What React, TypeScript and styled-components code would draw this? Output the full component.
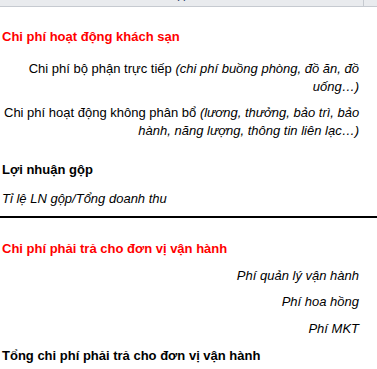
import styled, { createGlobalStyle } from 'styled-components';

const GlobalStyle = createGlobalStyle`
  html, body {
    margin: 0;
    padding: 0;
    background: #ffffff;
  }
  body {
    font-family: 'Liberation Sans', Arial, sans-serif;
    font-size: 13px;
    color: #000000;
  }
`;

const Sheet = styled.div`
  width: 377px;
  height: 369px;
  overflow: hidden;
  display: flex;
  flex-direction: column;
`;

const ColumnHeader = styled.div`
  display: flex;
  height: 6px;
  flex: 0 0 auto;
  background: #e9ebee;
  border-bottom: 1px solid #c6cad0;
`;

const HeaderCell = styled.div<{ w: number }>`
  width: ${({ w }) => w}px;
  flex: 0 0 auto;
  border-right: 1px solid #c6cad0;
  overflow: hidden;
  display: flex;
  justify-content: center;
  align-items: flex-end;
`;

// only the foot of the column letter peeks out below the scrolled edge
const HeaderLabel = styled.span`
  font-size: 11px;
  line-height: 11px;
  color: #1f3a66;
  margin-bottom: 3px;
`;

const Row = styled.div<{ h: number; pad?: number; border?: boolean }>`
  height: ${({ h }) => h}px;
  flex: 0 0 auto;
  box-sizing: border-box;
  display: flex;
  align-items: flex-end;
  padding-bottom: ${({ pad }) => pad ?? 3}px;
  border-bottom: ${({ border }) => (border ? '2px solid #000000' : 'none')};
`;

const Cell = styled.div<{ align?: 'left' | 'right' }>`
  width: 363px;
  box-sizing: border-box;
  padding: 0 ${({ align }) => (align === 'right' ? '4px' : '2px')};
  text-align: ${({ align }) => align ?? 'left'};
  line-height: 18px;
  white-space: nowrap;
`;

const Heading = styled.span<{ red?: boolean }>`
  font-weight: bold;
  color: ${({ red }) => (red ? '#ff0000' : '#000000')};
`;

const Note = styled.span`
  font-style: italic;
`;

export default function App() {
  return (
    <Sheet>
      <GlobalStyle />
      <ColumnHeader>
        <HeaderCell w={363}>
          <HeaderLabel>A</HeaderLabel>
        </HeaderCell>
      </ColumnHeader>

      <Row h={42}>
        <Cell>
          <Heading red>Chi phí hoạt động khách sạn</Heading>
        </Cell>
      </Row>
      <Row h={50}>
        <Cell align="right">
          Chi phí bộ phận trực tiếp <Note>(chi phí buồng phòng, đồ ăn, đồ</Note>
          <br />
          <Note>uống…)</Note>
        </Cell>
      </Row>
      <Row h={44}>
        <Cell align="right">
          Chi phí hoạt động không phân bổ <Note>(lương, thưởng, bảo trì, bảo</Note>
          <br />
          <Note>hành, năng lượng, thông tin liên lạc…)</Note>
        </Cell>
      </Row>
      <Row h={39}>
        <Cell>
          <Heading>Lợi nhuận gộp</Heading>
        </Cell>
      </Row>
      <Row h={36} pad={8} border>
        <Cell>
          <Note>Tỉ lệ LN gộp/Tổng doanh thu</Note>
        </Cell>
      </Row>

      <Row h={43}>
        <Cell>
          <Heading red>Chi phí phải trả cho đơn vị vận hành</Heading>
        </Cell>
      </Row>
      <Row h={27}>
        <Cell align="right">
          <Note>Phí quản lý vận hành</Note>
        </Cell>
      </Row>
      <Row h={26}>
        <Cell align="right">
          <Note>Phí hoa hồng</Note>
        </Cell>
      </Row>
      <Row h={27}>
        <Cell align="right">
          <Note>Phí MKT</Note>
        </Cell>
      </Row>
      <Row h={27}>
        <Cell>
          <Heading>Tổng chi phí phải trả cho đơn vị vận hành</Heading>
        </Cell>
      </Row>
    </Sheet>
  );
}
